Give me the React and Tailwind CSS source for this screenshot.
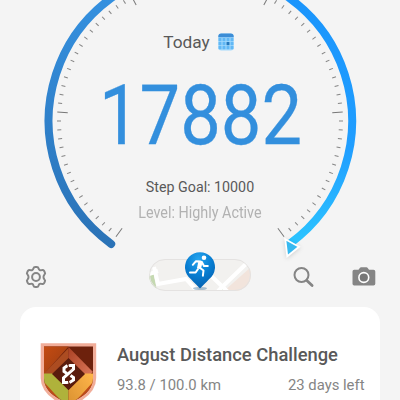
const TICKS = Array.from({ length: 81 }, (_, i) => ({ angle: 36 + i * 3.6, major: i % 16 === 0 }));

function Dial() {
  return (
    <svg className="absolute inset-0" width="400" height="400" viewBox="0 0 400 400" fill="none">
      <defs>
        <linearGradient id="leftArc" gradientUnits="userSpaceOnUse" x1="0" y1="0" x2="0" y2="248">
          <stop offset="0" stopColor="#3490df" />
          <stop offset="0.45" stopColor="#3082cc" />
          <stop offset="1" stopColor="#2a72b6" />
        </linearGradient>
        <linearGradient id="rightArc" gradientUnits="userSpaceOnUse" x1="0" y1="0" x2="0" y2="248">
          <stop offset="0" stopColor="#1b95fc" />
          <stop offset="0.6" stopColor="#209eff" />
          <stop offset="0.82" stopColor="#27b4ff" />
          <stop offset="1" stopColor="#2cc6ff" />
        </linearGradient>
      </defs>
      <path d="M111.2 243.9A152 152 0 0 1 200 -31" stroke="url(#leftArc)" strokeWidth="8" strokeLinecap="round" />
      <path d="M200 -31A152 152 0 0 1 289.5 243.9" stroke="url(#rightArc)" strokeWidth="8" />
      {TICKS.map(({ angle, major }) => (
        <line
          key={angle}
          x1="200"
          x2="200"
          y1={major ? 253.5 : 260}
          y2="264"
          stroke={major ? '#777' : '#858585'}
          strokeWidth="1"
          transform={`rotate(${angle} 200 121)`}
        />
      ))}
      <path d="M285.3 239.3 299 246.8 287.3 256.3Z" fill="#37b9f0" stroke="#fff" strokeWidth="1.8" className="drop-shadow-sm" />
    </svg>
  );
}

function CalendarIcon() {
  return (
    <svg width="16" height="18" viewBox="0 0 16 18">
      <rect x="0.3" y="0.5" width="15.4" height="17" rx="3" fill="#a5dafc" />
      <path d="M0.3 4.2V3.5a3 3 0 0 1 3-3h9.4a3 3 0 0 1 3 3v.7Z" fill="#3c8dd6" />
      {[5, 9, 13].map((y) => [0.5, 4.5, 8.5, 12.5].map((x) => (
        <rect key={`${x}-${y}`} x={x} y={y} width="3" height="3.2" rx="0.5" fill={x === 8.5 && y === 9 ? '#2377bd' : '#62b8f5'} />
      )))}
    </svg>
  );
}

function GearIcon() {
  return (
    <svg width="24" height="24" viewBox="0 0 24 24" fill="none" stroke="#858585" strokeWidth="2" strokeLinejoin="round">
      <path d="M9.4 3.6Q9.8 2 11.2 2H12.8Q14.2 2 14.6 3.6C15 5.2 16.2 5.6 17.6 5.1Q19.2 4.5 20 5.8L20.8 7.2Q21.6 8.5 20.4 9.6C19.2 10.9 19.2 13.1 20.4 14.4Q21.6 15.5 20.8 16.8L20 18.2Q19.2 19.5 17.6 18.9C16.2 18.4 15 18.8 14.6 20.4Q14.2 22 12.8 22H11.2Q9.8 22 9.4 20.4C9 18.8 7.8 18.4 6.4 18.9Q4.8 19.5 4 18.2L3.2 16.8Q2.4 15.5 3.6 14.4C4.8 13.1 4.8 10.9 3.6 9.6Q2.4 8.5 3.2 7.2L4 5.8Q4.8 4.5 6.4 5.1C7.8 5.6 9 5.2 9.4 3.6Z" />
      <circle cx="12" cy="12" r="3.9" />
    </svg>
  );
}

function SearchIcon() {
  return (
    <svg width="22" height="22" viewBox="0 0 22 22" fill="none" stroke="#858585">
      <circle cx="8.5" cy="8" r="7" strokeWidth="2" />
      <path d="m13.8 13.4 5.3 5.1" strokeWidth="2.8" strokeLinecap="round" />
    </svg>
  );
}

function CameraIcon() {
  return (
    <svg width="24" height="20" viewBox="0 0 24 20">
      <path d="M2.2 2.8h4.3L8 .8q.4-.5 1-.5h5.5q.6 0 1 .5l1.5 2h4.5Q23.3 2.8 23.3 4.5v12.3q0 1.8-1.8 1.8H2.2Q.5 18.6.5 16.8V4.5q0-1.7 1.7-1.7Z" fill="#858585" />
      <circle cx="11.8" cy="10.5" r="4.9" fill="#777" stroke="#fff" strokeWidth="1.6" />
    </svg>
  );
}

function MapButton() {
  return (
    <div className="relative h-8 w-[102px]">
      <svg className="absolute -top-2.5 left-0" width="102" height="44" viewBox="0 0 102 44">
        <defs>
          <clipPath id="pill"><rect y="10" width="102" height="32" rx="16" /></clipPath>
          <radialGradient id="pin" cx="0.45" cy="0.2" r="0.85">
            <stop offset="0" stopColor="#25a5ef" />
            <stop offset="0.5" stopColor="#087ed2" />
            <stop offset="1" stopColor="#045cab" />
          </radialGradient>
        </defs>
        <g clipPath="url(#pill)">
          <rect y="10" width="102" height="32" fill="#f2f1ef" />
          <path d="M0 23 4 22 8 42H0Z" fill="#c5d9b1" />
          <path d="M75 42 102 18V42Z" fill="#f2e4dc" />
          <path d="m68 42 5-4 4 4Z" fill="#cbdeb9" />
          <path d="m5 18 4 17 28-5 11 12M55 20l25 24M99 13 69 42M0 25l9-3" fill="none" stroke="#fff" strokeWidth="4" />
        </g>
        <rect x="0.5" y="10.5" width="101" height="31" rx="15.5" fill="none" stroke="#e4e2e1" />
        <ellipse cx="51" cy="39.5" rx="7" ry="1.6" fill="#1c5c90" opacity="0.35" />
        <path d="M51 39.5C48.5 36.5 45.5 34.2 42 30.2A15 15 0 1 1 60 30.2C56.5 34.2 53.5 36.5 51 39.5Z" fill="url(#pin)" />
        <circle cx="55" cy="8.8" r="2.3" fill="#fff" />
        <path d="m50.5 18.5 4 3-.6 5.2M49 20l-2.4 3.5-5.6-.1M51.6 12.6l-4.6-.4-3.2 3.6M52.8 13l2.2 4h3.8" fill="none" stroke="#fff" strokeWidth="2" strokeLinecap="round" strokeLinejoin="round" />
        <path d="m49.5 11.7 4.3 1-2 7.6-3.8-1.2Z" fill="#fff" />
      </svg>
    </div>
  );
}

function ChallengeBadge() {
  return (
    <svg width="58" height="66" viewBox="0 0 58 66">
      <defs>
        <clipPath id="shield"><path d="M4 3.5H53V35Q53 51 28.5 60 4 51 4 35Z" /></clipPath>
        <linearGradient id="ember" x1="0" y1="0" x2="1" y2="1">
          <stop offset="0" stopColor="#c54b11" />
          <stop offset="1" stopColor="#973d15" />
        </linearGradient>
        <linearGradient id="copper" x1="0" y1="0" x2="1" y2="1">
          <stop offset="0" stopColor="#a94023" />
          <stop offset="1" stopColor="#de7b5e" />
        </linearGradient>
        <linearGradient id="gold" x1="0" y1="1" x2="1" y2="0">
          <stop offset="0" stopColor="#d99030" />
          <stop offset="1" stopColor="#ffb64a" />
        </linearGradient>
      </defs>
      <path d="M.7.2H56.2V35Q56.2 53 28.5 64 .7 53 .7 35Z" fill="#f1ad99" />
      <g clipPath="url(#shield)">
        <path d="M4 3h50v58H4Z" fill="#6d210c" />
        <path d="M4 3H29L4 31Z" fill="url(#ember)" />
        <path d="M28.5 5 4 30.5 11 36 28.5 17Z" fill="#ac4c21" />
        <path d="M28.5 4 53 29 46 35 28.5 16Z" fill="url(#copper)" />
        <path d="M4 30.5h8.5L28.5 47v17L4 42Z" fill="#afb23b" />
        <path d="M53 30.5h-8.5L28.5 47v17L53 42Z" fill="url(#gold)" />
        <path d="M4 39 24 61H4ZM53 39 33 61H53Z" fill="#bd4b18" />
        <path d="M28.5 15 45 31 28.5 47 12 31Z" fill="#5a1c0d" />
      </g>
      <g fill="none" stroke="#fff" strokeWidth="3" strokeLinejoin="miter">
        <path d="M28 39.5H23.5V35L33.5 26V22.5H29" />
        <path d="M27.5 22.5 24 25V28.5L27 30.5M30.5 32.5 33.5 34.5V37L29.5 39.5" />
      </g>
      <path d="m29.5 21-2.5 3M27.5 41l3-3M30 28.5l2.5-2.5" stroke="#d8bbb2" strokeWidth="0.8" />
    </svg>
  );
}

export default function App() {
  return (
    <div className="relative h-[400px] w-[400px] overflow-hidden bg-[#f4f4f4] font-['Roboto',sans-serif] text-[#595959]">
      <Dial />
      <div className="flex h-[254px] flex-col items-center pt-[31px]">
        <div className="flex items-center gap-2 pr-[3px] text-[17.3px] leading-[22px]">
          <span>Today</span>
          <CalendarIcon />
        </div>
        <div className="mt-[22.5px] origin-center translate-x-[0.5px] scale-x-[0.86] text-[84px] leading-[80px] text-[#338fdd] [-webkit-text-stroke:0.3px_#338fdd]">17882</div>
        <div className="mt-[21.5px] text-[14.25px] leading-5">Step Goal: 10000</div>
        <div className="mt-1.5 scale-x-[0.87] text-[16.5px] leading-5 text-[#b2b2b2]">Level: Highly Active</div>
      </div>
      <div className="flex h-[53px] items-start pl-6">
        <div className="mt-[11px]"><GearIcon /></div>
        <div className="mt-[5px] ml-[101px]"><MapButton /></div>
        <div className="mt-[13px] ml-[42px]"><SearchIcon /></div>
        <div className="mt-[13px] ml-[36.5px]"><CameraIcon /></div>
      </div>
      <div className="mx-5 flex h-[120px] rounded-t-2xl rounded-b-2xl bg-white pt-9 pl-5">
        <ChallengeBadge />
        <div className="ml-[19px] w-[247.5px]">
          <h2 className="text-[18.35px] leading-6 font-medium">August Distance Challenge</h2>
          <div className="mt-2 flex justify-between text-[14.85px] leading-5 text-[#858585]">
            <span>93.8 / 100.0 km</span>
            <span>23 days left</span>
          </div>
        </div>
      </div>
    </div>
  );
}
